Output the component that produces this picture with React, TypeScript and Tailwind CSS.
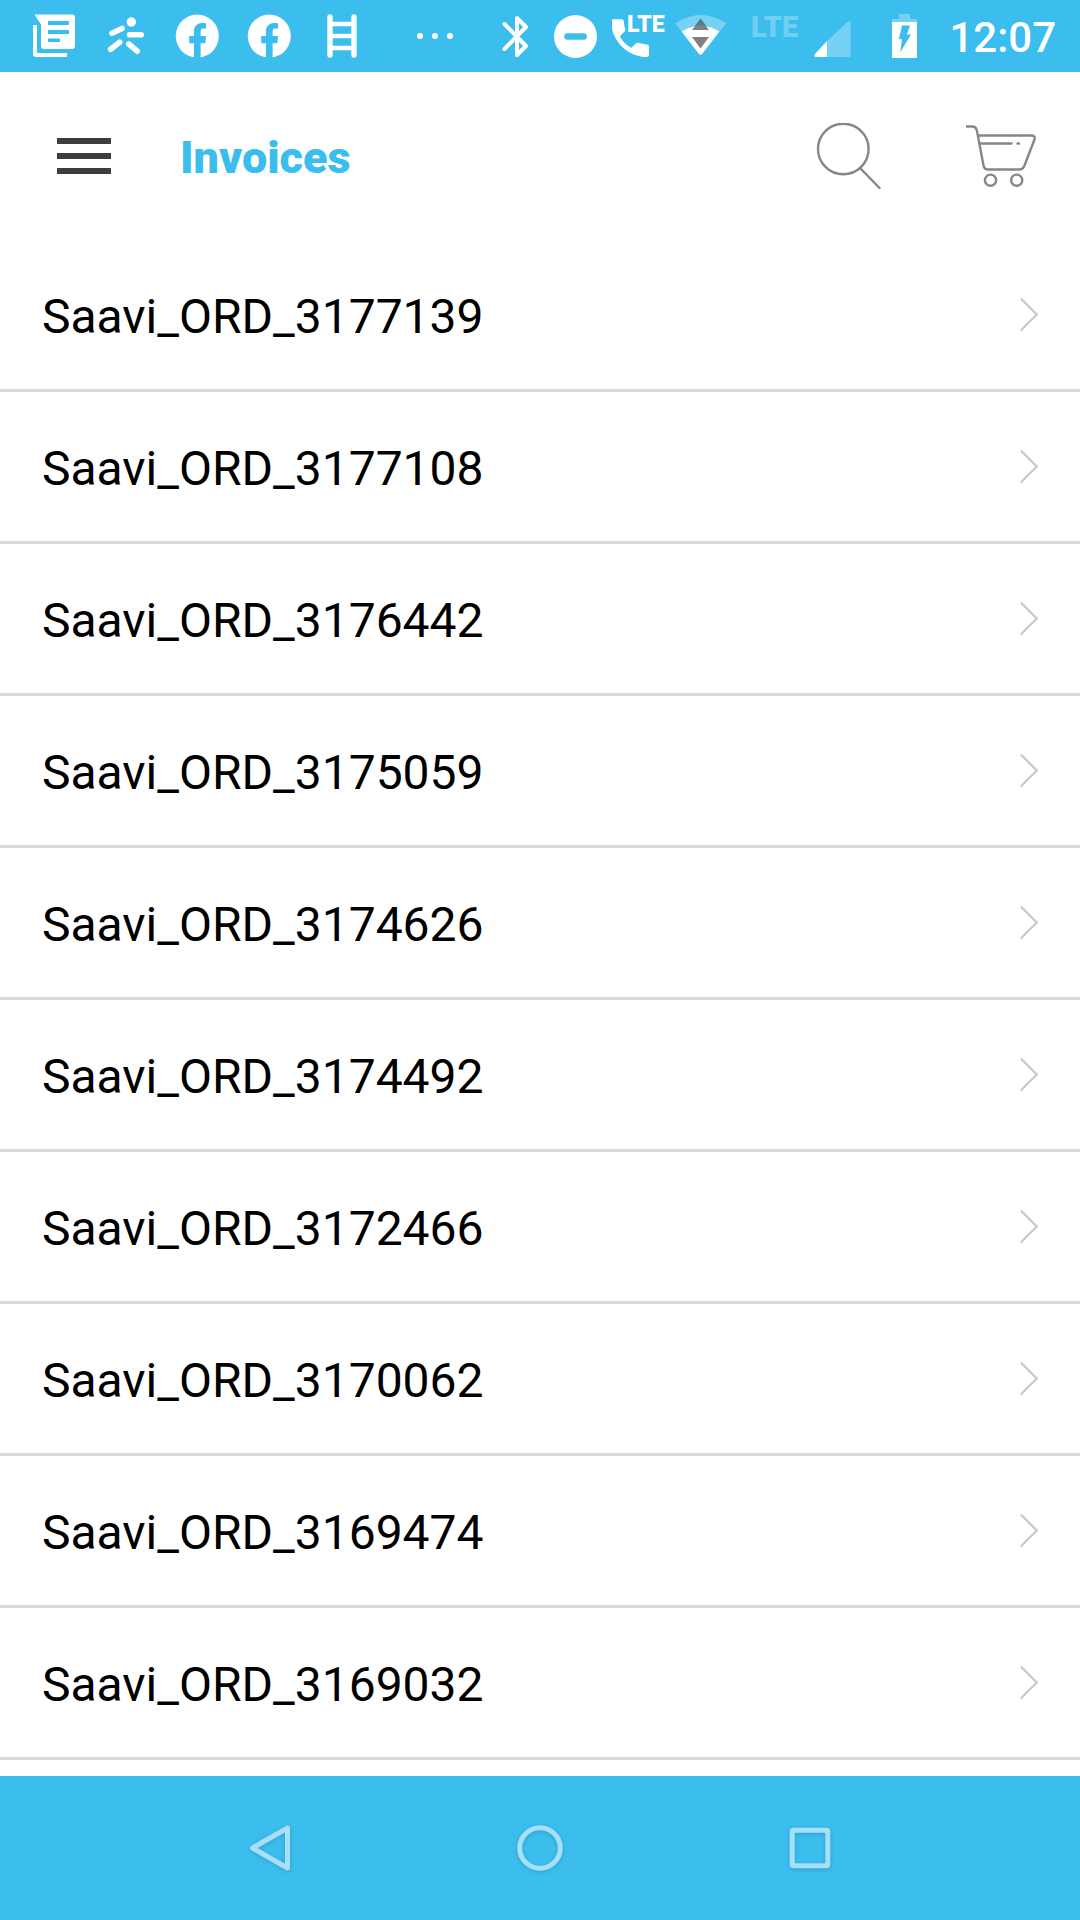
const invoices = [
  'Saavi_ORD_3177139',
  'Saavi_ORD_3177108',
  'Saavi_ORD_3176442',
  'Saavi_ORD_3175059',
  'Saavi_ORD_3174626',
  'Saavi_ORD_3174492',
  'Saavi_ORD_3172466',
  'Saavi_ORD_3170062',
  'Saavi_ORD_3169474',
  'Saavi_ORD_3169032',
];

function FacebookIcon() {
  return (
    <svg className="h-[72px] w-[72px]" viewBox="0 0 72 72" fill="currentColor" aria-hidden="true">
      <path d="M31.9 57.3V43.2H27.2V36H31.9V32.2C31.9 26.4 34.8 23 40.4 23C42 23 43.4 23.2 44.2 23.4V28.5H41.3C39.3 28.5 38.6 29.7 38.6 31.7V36H44.1L43.2 43.2H38.6V57.3A21.5 21.5 0 1 0 31.9 57.3Z" />
    </svg>
  );
}

function StatusBar() {
  return (
    <div className="flex h-[72px] items-center justify-between bg-[#3bbdee] pr-6 pl-[18px] text-white">
      <div className="flex items-center">
        <svg className="h-[72px] w-[72px]" viewBox="0 0 72 72" fill="currentColor" aria-hidden="true">
          <path
            fillRule="evenodd"
            d="M16.5 14.5H54Q57 14.5 57 17.5V46Q57 49 54 49H26Q23 49 23 46V24.5ZM30 21V25H51V21ZM30 30V34H51V30ZM30 38.5V42H42V38.5Z"
          />
          <path d="M15 25H19V53H49V57H18Q15 57 15 54Z" />
        </svg>
        <svg className="h-[72px] w-[72px]" viewBox="0 0 72 72" fill="none" stroke="currentColor" strokeWidth="5.6" strokeLinecap="round" aria-hidden="true">
          <circle cx="41.3" cy="22" r="4.7" fill="currentColor" stroke="none" />
          <path d="M22 33.2L32 28.4M39.6 34.8H51.2M20.6 49.2L29.6 42.2M38.8 44L47.2 51.2" />
        </svg>
        <FacebookIcon />
        <FacebookIcon />
        <svg className="h-[72px] w-[72px]" viewBox="0 0 72 72" fill="none" stroke="currentColor" aria-hidden="true">
          <path d="M24 24H48M24 36H48M24 48H48" strokeWidth="4.4" />
          <path d="M24 17V55M48 17V55" strokeWidth="5.4" strokeLinecap="round" />
        </svg>
        <svg className="h-[72px] w-[114px]" viewBox="0 0 114 72" fill="currentColor" aria-hidden="true">
          <circle cx="42" cy="36" r="3" />
          <circle cx="57" cy="36" r="3" />
          <circle cx="72" cy="36" r="3" />
        </svg>
      </div>

      <div className="flex items-center">
        <svg className="h-[72px] w-12" viewBox="0 0 48 72" fill="none" stroke="currentColor" strokeWidth="4" strokeLinejoin="round" strokeLinecap="round" aria-hidden="true">
          <path d="M12.5 24L34 46L25 55V18L34 27L12.5 49" />
        </svg>
        <svg className="h-[72px] w-[72px]" viewBox="0 0 72 72" aria-hidden="true">
          <circle cx="35.5" cy="36.5" r="21.5" fill="currentColor" />
          <path d="M27.5 36.5H43.5" stroke="#3bbdee" strokeWidth="6.6" strokeLinecap="round" />
        </svg>
        <svg className="h-[72px] w-[60px]" viewBox="0 0 60 72" fill="currentColor" aria-label="LTE call">
          <path d="M1.5 19.3H9.5Q11.6 19.3 11.8 21.2Q12 25.5 13.2 29.3Q13.5 30.5 12.7 31.4L7.8 36.2Q11.7 43.8 19.4 47.8L24 43.3Q25 42.3 26.2 42.8Q30 44.2 34.8 44.4Q37 44.6 37 46.4V55Q37 57 35 57C15.5 57 -0.8 40.5 -0.8 21.4Q-0.6 19.3 1.5 19.3Z" />
          <text x="15" y="32" fontSize="23" fontWeight="900">LTE</text>
        </svg>
        <svg className="h-[72px] w-[60px]" viewBox="0 0 60 72" aria-hidden="true">
          <path d="M3 23.5Q28.5 6.5 54.5 23.5L47.5 31.5Q28.5 20 9.5 31.5Z" fill="#fff" fillOpacity=".3" />
          <path d="M9.5 31.5Q28.5 20 47.5 31.5L30.5 53.5Q28.5 56 26.5 53.5Z" fill="#fff" />
          <path d="M28.5 18.5L37 30H20Z" fill="#808080" />
          <path d="M28.5 18.5L34 26Q28.5 25 23 26Z" fill="#4e7f90" />
          <path d="M20 37H37L28.5 48.5Z" fill="#808080" />
        </svg>
        <svg className="h-[72px] w-[132px]" viewBox="0 0 132 72" fill="currentColor" aria-label="LTE signal">
          <text x="19" y="37" fontSize="29" fontWeight="900" fillOpacity=".3">LTE</text>
          <path d="M95 41L116 21.5Q118.5 20 118.5 22.5V57H95Z" fillOpacity=".3" />
          <path d="M95 41V57H84Q81 57 83 54Z" />
        </svg>
        <svg className="h-[72px] w-20" viewBox="0 0 80 72" fill="currentColor" aria-hidden="true">
          <path d="M35 14H46V19H53V22H28V19H35Z" fillOpacity=".3" />
          <path d="M28 22H53V58H28Z" />
          <path d="M38 25.5H46L43 34.5H47L36.2 52.5L38 39.2H34.8Z" fill="#3bbdee" />
        </svg>
        <time className="w-[112px] pt-1 text-right text-[42px] leading-none font-medium">12:07</time>
      </div>
    </div>
  );
}

function Header() {
  return (
    <header className="flex h-[168px] items-center pr-[42px] pl-[57px]">
      <button type="button" aria-label="Menu" className="flex flex-col gap-[9px]">
        <span className="h-1.5 w-[54px] bg-[#3d3d3d]" />
        <span className="h-1.5 w-[54px] bg-[#3d3d3d]" />
        <span className="h-1.5 w-[54px] bg-[#3d3d3d]" />
      </button>
      <h1 className="ml-[69px] flex-1 pt-0.5 text-[45px] leading-none font-black text-[#3bbdee]">Invoices</h1>
      <div className="flex items-center gap-[84px] text-[#878787]">
        <button type="button" aria-label="Search">
          <svg className="h-[66px] w-[66px]" viewBox="0 0 66 66" fill="none" stroke="currentColor" strokeWidth="2.4" strokeLinecap="round">
            <circle cx="27.3" cy="26" r="25.3" />
            <path d="M44.5 45.5L63.5 65" />
          </svg>
        </button>
        <button type="button" aria-label="Cart">
          <svg className="h-[66px] w-[72px]" viewBox="0 0 72 66" fill="none" stroke="currentColor" strokeWidth="2.4" strokeLinecap="round" strokeLinejoin="round">
            <path d="M0.5 3.5H6C9 3.5 10.4 4.8 11 8L17.5 42.5Q18.2 46.5 22 46.5H53Q56.8 46.5 58.2 43.2L68.5 16.5Q69.5 12.5 65.5 12.5H12.3" />
            <path d="M13.8 20.5H45.5M51.5 20.5H53" />
            <circle cx="24.5" cy="57.2" r="5.6" />
            <circle cx="50.7" cy="57.2" r="5.6" />
          </svg>
        </button>
      </div>
    </header>
  );
}

function InvoiceRow({ name }: { name: string }) {
  return (
    <li className="border-b-[3px] border-[#dadada]">
      <a href="#" className="flex h-[149px] items-center justify-between px-[42px]">
        <span className="pt-1 text-5xl text-black">{name}</span>
        <svg className="h-9 w-[18px]" viewBox="0 0 18 36" fill="none" stroke="#c8c8c8" strokeWidth="2.2" aria-hidden="true">
          <path d="M0.8 1.5L16.8 17.5L0.8 33.5" />
        </svg>
      </a>
    </li>
  );
}

function NavigationBar() {
  return (
    <nav className="flex h-36 items-center bg-[#3bbdee] px-[12.5%] text-[#a5e0f8]">
      <button type="button" aria-label="Back" className="flex flex-1 justify-center">
        <svg className="h-12 w-12 drop-shadow-sm" viewBox="0 0 48 48" fill="none" stroke="currentColor" strokeWidth="5" strokeLinejoin="round">
          <path d="M41.5 4V44L6.5 24Z" />
        </svg>
      </button>
      <button type="button" aria-label="Home" className="flex flex-1 justify-center">
        <svg className="h-12 w-12 drop-shadow-sm" viewBox="0 0 48 48" fill="none" stroke="currentColor" strokeWidth="5">
          <circle cx="24" cy="24" r="20.3" />
        </svg>
      </button>
      <button type="button" aria-label="Recent apps" className="flex flex-1 justify-center">
        <svg className="h-12 w-12 drop-shadow-sm" viewBox="0 0 48 48" fill="none" stroke="currentColor" strokeWidth="5">
          <rect x="6.2" y="6.2" width="35.6" height="35.6" rx="1.5" />
        </svg>
      </button>
    </nav>
  );
}

export default function App() {
  return (
    <div className="flex min-h-screen flex-col bg-white font-[Roboto,sans-serif]">
      <StatusBar />
      <Header />
      <main className="flex-1">
        <ul>
          {invoices.map((name) => (
            <InvoiceRow key={name} name={name} />
          ))}
        </ul>
      </main>
      <NavigationBar />
    </div>
  );
}
